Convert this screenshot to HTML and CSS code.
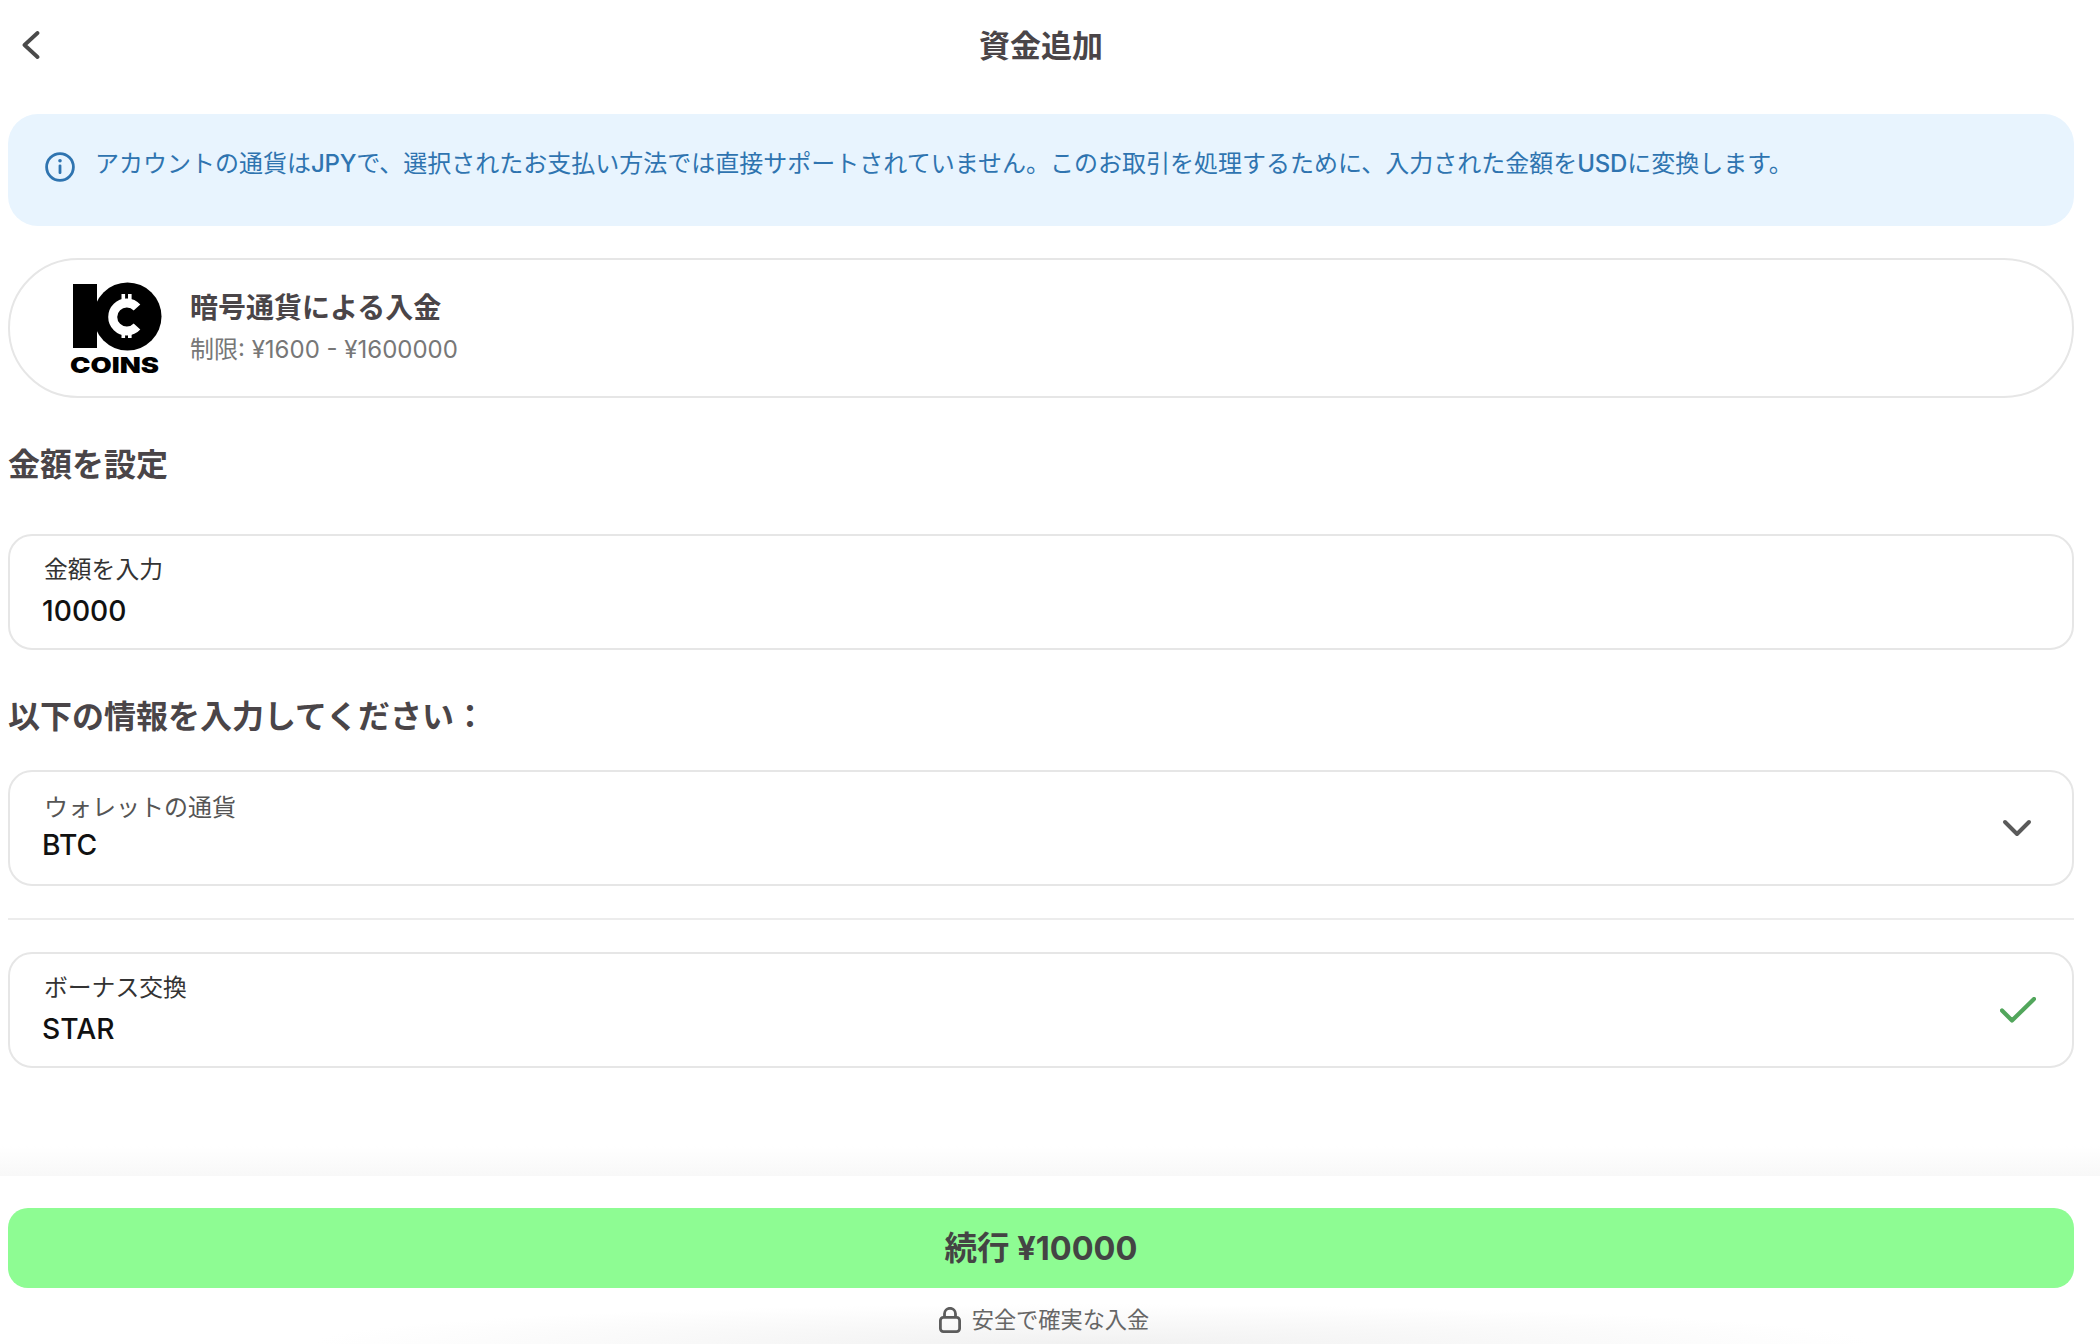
FILE: index.html
```html
<!DOCTYPE html>
<html lang="ja">
<head>
<meta charset="utf-8">
<title>資金追加</title>
<link rel="stylesheet" href="styles.css">
</head>
<body>
<div class="page">
  <main class="main">
    <header class="topbar">
      <button class="back" aria-label="戻る">
        <svg width="18" height="28" viewBox="0 0 18 28" fill="none"><path d="M15.5 2 2.5 14l13 12" stroke="#4a4a4a" stroke-width="3.8" stroke-linecap="round" stroke-linejoin="round"/></svg>
      </button>
      <h1 class="title">資金追加</h1>
    </header>

    <div class="notice">
      <svg class="notice-icon" width="30" height="30" viewBox="0 0 30 30" fill="none"><circle cx="15" cy="15" r="13.4" stroke="#2f74b0" stroke-width="2.8"/><rect x="13.6" y="12.6" width="2.8" height="9.4" rx="1.2" fill="#2f74b0"/><circle cx="15" cy="8.8" r="1.8" fill="#2f74b0"/></svg>
      <p class="notice-text">アカウントの通貨は<b class="latin">JPY</b>で、選択されたお支払い方法では直接サポートされていません。このお取引を処理するために、入力された金額を<b class="latin">USD</b>に変換します。</p>
    </div>

    <section class="method">
      <svg class="logo" width="92" height="92" viewBox="0 0 92 92">
        <rect x="3" y="1" width="24" height="64" fill="#000"/>
        <circle cx="57.5" cy="33.5" r="34" fill="#000"/>
        <path d="M67 24.5A14 14 0 1 0 67 43.5" fill="none" stroke="#fff" stroke-width="9"/>
        <rect x="51.5" y="11" width="3.6" height="10" fill="#fff"/><rect x="58" y="11" width="3.6" height="10" fill="#fff"/>
        <rect x="51.5" y="47" width="3.6" height="8" fill="#fff"/><rect x="58" y="47" width="3.6" height="8" fill="#fff"/>
        <text class="logo-text" x="0" y="90" textLength="89" lengthAdjust="spacingAndGlyphs">COINS</text>
      </svg>
      <div class="method-info">
        <div class="method-name">暗号通貨による入金</div>
        <div class="method-limit">制限: ¥1600 - ¥1600000</div>
      </div>
    </section>

    <h2 class="heading heading-amount">金額を設定</h2>

    <div class="field">
      <div class="field-body">
        <div class="field-label">金額を入力</div>
        <div class="field-value">10000</div>
      </div>
    </div>

    <h2 class="heading heading-info">以下の情報を入力してください：</h2>

    <div class="field">
      <div class="field-body field-body-tight">
        <div class="field-label field-label-muted">ウォレットの通貨</div>
        <div class="field-value">BTC</div>
      </div>
      <svg class="chevron" width="30" height="18" viewBox="0 0 30 18" fill="none"><path d="M3 3 15 15 27 3" stroke="#5a5a5a" stroke-width="4" stroke-linecap="round" stroke-linejoin="round"/></svg>
    </div>

    <hr class="divider">

    <div class="field">
      <div class="field-body">
        <div class="field-label">ボーナス交換</div>
        <div class="field-value">STAR</div>
      </div>
      <svg class="check" width="36" height="26" viewBox="0 0 36 26" fill="none"><path d="M2 13.5 12 23.5 34 2" stroke="#52a65c" stroke-width="4.2" stroke-linecap="round" stroke-linejoin="round"/></svg>
    </div>
  </main>

  <footer class="footer">
    <button class="cta">続行 ¥10000</button>
    <div class="secure">
      <svg width="22" height="26" viewBox="0 0 22 26" fill="none"><rect x="1.4" y="10.4" width="19.2" height="14.2" rx="3" stroke="#5c5c5c" stroke-width="2.8"/><path d="M5.5 10V6.8a5.5 5.5 0 0 1 11 0V10" stroke="#5c5c5c" stroke-width="2.8"/></svg>
      <span>安全で確実な入金</span>
    </div>
  </footer>
</div>
</body>
</html>
```

FILE: styles.css
```css
* { box-sizing: border-box; }
html, body { margin: 0; padding: 0; background: #fff; }
body { font-family: Inter, "Noto Sans CJK JP", sans-serif; color: #4a4548; }
.page { height: 1344px; display: flex; flex-direction: column; overflow: hidden; }
.main { flex: 1; padding: 0 26px 0 8px; }

.topbar { height: 90px; display: flex; align-items: center; justify-content: center; position: relative; }
.back { position: absolute; left: 14px; top: 31px; padding: 0; border: 0; background: none; line-height: 0; }
.title { margin: 0; font-size: 31px; font-weight: 700; color: #4a4548; line-height: 1; }

.notice { margin-top: 24px; height: 112px; background: #e8f4fe; border-radius: 30px; display: flex; align-items: flex-start; gap: 20px; padding: 38px 0 0 37px; }
.notice-icon { flex: none; }
.notice-text { margin: 0; margin-top: -6px; font-size: 24px; line-height: 36px; color: #2f74b0; white-space: nowrap; }
.latin { font-weight: 500; letter-spacing: -0.2px; }

.method { margin-top: 32px; height: 140px; border: 2px solid #e6e6e6; border-radius: 70px; display: flex; align-items: center; padding: 0 0 0 60px; gap: 28px; }
.logo { flex: none; margin-top: 2px; overflow: visible; }
.logo-text { font-family: Inter, sans-serif; font-weight: 900; font-size: 22px; fill: #000; }
.method-info { display: flex; flex-direction: column; gap: 8px; margin-top: 0; }
.method-name { font-size: 28px; font-weight: 700; line-height: 36px; color: #4a4548; }
.method-limit { font-size: 24px; line-height: 32px; color: #777; }

.heading { margin: 0; font-size: 32px; font-weight: 700; line-height: 44px; color: #4a4548; }
.heading-amount { margin-top: 45px; margin-bottom: 47px; }
.heading-info { margin-top: 45px; margin-bottom: 31px; }

.field { height: 116px; border: 2px solid #e6e6e6; border-radius: 24px; display: flex; align-items: center; justify-content: space-between; padding: 0 40px 2px 32px; }
.field-body { display: flex; flex-direction: column; gap: 6px; }
.field-body-tight { gap: 2px; }
.field-label { font-size: 23.8px; line-height: 34px; color: #333; padding-left: 2px; }
.field-label-muted { color: #555; font-size: 24px; }
.field-value { font-size: 28.2px; font-weight: 500; line-height: 36px; color: #111; }
.chevron { margin-top: 1px; }
.check { margin: 2px -4px 0 0; }

.divider { margin: 32px 0; border: 0; height: 2px; background: #ececec; }

.footer { position: relative; height: 168px; padding: 32px 26px 0 8px; background: radial-gradient(ellipse 780px 40px at 52% 100%, #f1f1f1, rgba(241,241,241,0) 100%), #fff; }
.footer::before { content: ""; position: absolute; left: 0; right: 0; top: -30px; height: 30px; background: linear-gradient(to bottom, rgba(247,247,247,0), #f8f8f8); }
.cta { display: block; width: 100%; height: 80px; border: 0; border-radius: 20px; background: #8efc93; padding: 0 0 6px; font-family: inherit; font-size: 32.5px; font-weight: 700; color: #444; }
.secure { display: flex; align-items: center; justify-content: center; gap: 11px; margin-top: 19px; padding-left: 6px; font-size: 22.2px; line-height: 26px; color: #666; }
```
